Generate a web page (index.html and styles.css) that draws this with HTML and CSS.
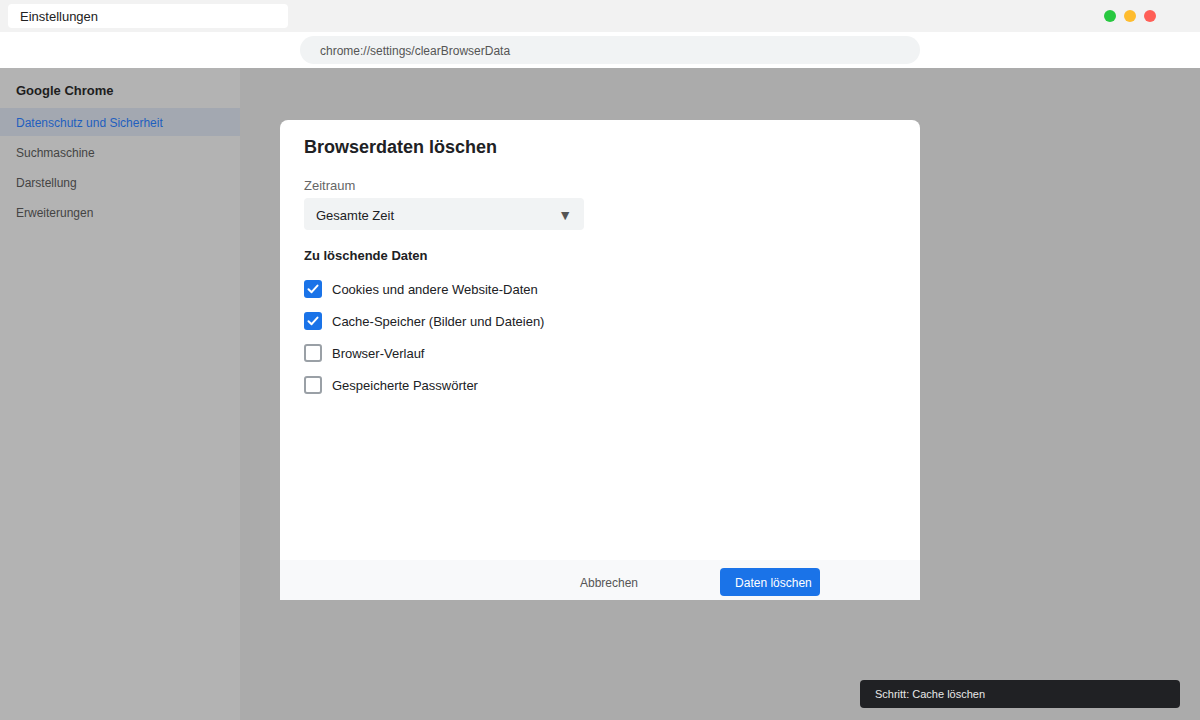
FILE: index.html
```html
<!DOCTYPE html>
<html>
<head>
  <title>Einstellungen</title>
  <link rel="stylesheet" href="styles.css">
</head>
<body>
  <div class="titlebar">
    <div class="tab">Einstellungen</div>
    <div class="lights">
      <span class="light green"></span>
      <span class="light yellow"></span>
      <span class="light red"></span>
    </div>
  </div>
  <div class="addressbar">
    <div class="url">chrome://settings/clearBrowserData</div>
  </div>

  <div class="page">
    <div class="sidebar">
      <div class="brand">Google Chrome</div>
      <div class="nav-item active">Datenschutz und Sicherheit</div>
      <div class="nav-item">Suchmaschine</div>
      <div class="nav-item">Darstellung</div>
      <div class="nav-item">Erweiterungen</div>
    </div>

    <div class="main">
      <div class="dialog">
        <div class="dialog-body">
          <h2 class="dialog-title">Browserdaten löschen</h2>
          <div class="field-label">Zeitraum</div>
          <div class="select">
            <span>Gesamte Zeit</span>
            <span class="arrow">&#9660;</span>
          </div>
          <div class="section-title">Zu löschende Daten</div>
          <!-- data types to clear -->
          <div class="check-row">
            <span class="checkbox checked">
              <svg width="14" height="14" viewBox="0 0 14 14"><path d="M2.5 7.3 L5.6 10.2 L11.5 3.6" fill="none" stroke="#fff" stroke-width="2" stroke-linecap="round" stroke-linejoin="round"/></svg>
            </span>
            <span>Cookies und andere Website-Daten</span>
          </div>
          <div class="check-row">
            <span class="checkbox checked">
              <svg width="14" height="14" viewBox="0 0 14 14"><path d="M2.5 7.3 L5.6 10.2 L11.5 3.6" fill="none" stroke="#fff" stroke-width="2" stroke-linecap="round" stroke-linejoin="round"/></svg>
            </span>
            <span>Cache-Speicher (Bilder und Dateien)</span>
          </div>
          <div class="check-row">
            <span class="checkbox"></span>
            <span>Browser-Verlauf</span>
          </div>
          <div class="check-row">
            <span class="checkbox"></span>
            <span>Gespeicherte Passwörter</span>
          </div>
        </div>
        <div class="dialog-footer">
          <button class="btn-cancel">Abbrechen</button>
          <button class="btn-primary">Daten löschen</button>
        </div>
      </div>
    </div>
  </div>

  <div class="toast">Schritt: Cache löschen</div>
</body>
</html>
```

FILE: styles.css
```css
html, body {
  margin: 0;
  height: 100%;
}
body {
  font-family: "Liberation Sans", Arial, sans-serif;
  background-color: #ababab;
  display: flex;
  flex-direction: column;
  overflow: hidden;
}

/* window chrome */
.titlebar {
  height: 32px;
  background-color: #f2f2f2;
  display: flex;
  align-items: center;
  padding: 0 8px;
  box-sizing: border-box;
}
.tab {
  width: 280px;
  height: 24px;
  background-color: #ffffff;
  border-radius: 4px;
  font-size: 13px;
  color: #222;
  padding-left: 12px;
  box-sizing: border-box;
  display: flex;
  align-items: center;
}
.lights {
  margin-left: auto;
  margin-right: 36px;
  display: flex;
  gap: 8px;
}
.light {
  width: 12px;
  height: 12px;
  border-radius: 50%;
}
.green { background-color: #28c840; }
.yellow { background-color: #febc2e; }
.red { background-color: #ff5f57; }

.addressbar {
  height: 36px;
  background-color: #ffffff;
  display: flex;
  align-items: center;
  padding-left: 300px;
}
.url {
  width: 620px;
  height: 28px;
  background-color: #f1f3f4;
  border-radius: 14px;
  font-size: 12px;
  color: #555;
  padding: 2px 0 0 20px;
  box-sizing: border-box;
  display: flex;
  align-items: center;
}

/* page */
.page {
  flex: 1;
  display: flex;
}
.sidebar {
  width: 240px;
  background-color: #b3b3b3;
}
.brand {
  font-size: 13px;
  font-weight: bold;
  color: #1e1e1e;
  padding: 15px 16px 0;
  height: 40px;
  box-sizing: border-box;
}
.nav-item {
  height: 28px;
  padding: 2px 16px 0;
  box-sizing: border-box;
  margin-bottom: 2px;
  font-size: 12px;
  color: #444;
  display: flex;
  align-items: center;
}
.nav-item.active {
  background-color: #a3a8b1;
  color: #1f5fbf;
}

.main {
  flex: 1;
  padding: 52px 0 0 40px;
}
.dialog {
  width: 640px;
  height: 480px;
  background-color: #ffffff;
  border-radius: 8px 8px 0 0;
  display: flex;
  flex-direction: column;
}
.dialog-body {
  flex: 1;
  padding: 17px 24px 0;
}
.dialog-title {
  margin: 0 0 20px;
  font-size: 18px;
  font-weight: bold;
  color: #202124;
}
.field-label {
  font-size: 13px;
  color: #666;
  margin-bottom: 5px;
}
.select {
  width: 280px;
  height: 32px;
  background-color: #f1f3f4;
  border-radius: 4px;
  padding: 2px 12px 0;
  box-sizing: border-box;
  display: flex;
  align-items: center;
  justify-content: space-between;
  font-size: 13px;
  color: #202124;
}
.arrow {
  font-size: 14px;
  color: #555;
}
.section-title {
  font-size: 13px;
  font-weight: bold;
  color: #202124;
  margin: 18px 0 17px;
}
.check-row {
  display: flex;
  align-items: center;
  gap: 10px;
  height: 18px;
  margin-bottom: 14px;
  font-size: 13px;
  color: #202124;
}
.checkbox {
  width: 18px;
  height: 18px;
  box-sizing: border-box;
  border: 2px solid #9aa0a6;
  border-radius: 3px;
  display: flex;
  align-items: center;
  justify-content: center;
}
.checkbox.checked {
  border: none;
  background-color: #1a73e8;
}

.dialog-footer {
  height: 40px;
  background-color: #f8f9fa;
  display: flex;
  align-items: flex-start;
  box-sizing: border-box;
  padding: 8px 0 0 280px;
  gap: 62px;
}
.dialog-footer button {
  font-family: "Liberation Sans", Arial, sans-serif;
  font-size: 12px;
  height: 28px;
  border: none;
  cursor: pointer;
  padding-top: 2px;
}
.btn-cancel {
  background: transparent;
  color: #555;
  padding-left: 20px;
  padding-right: 20px;
}
.btn-primary {
  width: 100px;
  background-color: #1a73e8;
  color: #ffffff;
  border-radius: 4px;
  text-align: left;
  padding-left: 15px;
  padding-right: 0;
}

.toast {
  position: absolute;
  left: 860px;
  top: 680px;
  width: 320px;
  height: 28px;
  background-color: #202124;
  border-radius: 4px;
  color: #e8e8e8;
  font-size: 11px;
  padding-left: 15px;
  box-sizing: border-box;
  display: flex;
  align-items: center;
}
```
